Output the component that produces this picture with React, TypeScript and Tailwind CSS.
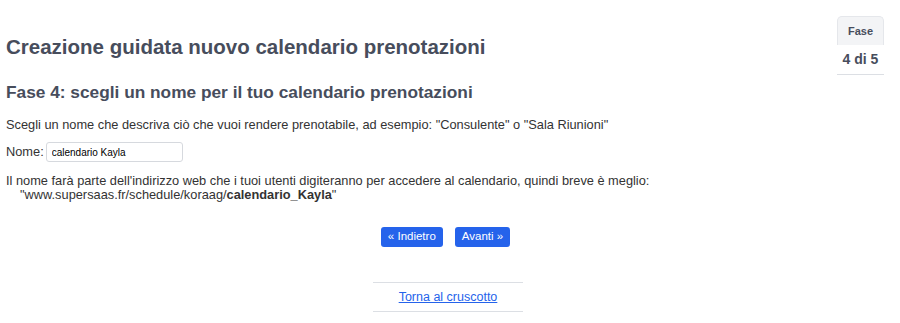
export default function App() {
  return (
    <div className="min-h-screen bg-white px-[6px] pt-[16px] text-[12.8px] text-[#333] font-['Liberation_Sans',Arial,sans-serif]">
      {/* Step indicator */}
      <div className="float-right mr-[10px] w-[47px] text-center">
        <div className="h-[29px] rounded-t-[5px] border border-b-0 border-[#e5e7eb] bg-[#f3f4f6] text-[11px] font-bold leading-[28px] text-[#474d5c]">
          Fase
        </div>
        <div className="border-b border-[#dcdfe4] pb-[6px] pt-[6px] text-[14px] font-bold leading-[17px] text-[#474d5c]">
          4 di 5
        </div>
      </div>

      <h1 className="pt-[19px] text-[20.5px] font-bold leading-[24px] text-[#474d5c]">
        Creazione guidata nuovo calendario prenotazioni
      </h1>
      <h2 className="mt-[23px] text-[17.3px] font-bold leading-[20px] text-[#474d5c]">
        Fase 4: scegli un nome per il tuo calendario prenotazioni
      </h2>

      <p className="mt-[15px] leading-[16px]">
        Scegli un nome che descriva ciò che vuoi rendere prenotabile, ad esempio: "Consulente" o "Sala Riunioni"
      </p>

      <div className="mt-[9px] flex items-center gap-[2px]">
        <label htmlFor="nome">Nome:</label>
        <input
          id="nome"
          type="text"
          defaultValue="calendario Kayla"
          className="h-[20px] w-[137px] rounded-[3px] border border-[#d6d9de] px-[5px] text-[10px] text-black outline-none"
        />
      </div>

      <p className="mt-[12px] leading-[14px]">
        Il nome farà parte dell'indirizzo web che i tuoi utenti digiteranno per accedere al calendario, quindi breve è meglio:
        <br />
        <span className="pl-[14px]">
          "www.supersaas.fr/schedule/koraag/<b>calendario_Kayla</b>"
        </span>
      </p>

      <div className="mt-[25px] flex justify-center gap-[12px] pr-[9px]">
        <button className="h-[20px] rounded-[3px] bg-[#2563eb] px-[7px] text-[11.5px] text-white">« Indietro</button>
        <button className="h-[20px] rounded-[3px] bg-[#2563eb] px-[7px] text-[11.5px] text-white">Avanti »</button>
      </div>

      <div className="mx-auto mt-[35px] w-[150px] -translate-x-[2px] border-y border-[#dcdfe4] py-[6px] text-center leading-[15px]">
        <a href="#" className="text-[12.5px] leading-[15px] text-[#2563eb] underline">
          Torna al cruscotto
        </a>
      </div>
    </div>
  );
}
